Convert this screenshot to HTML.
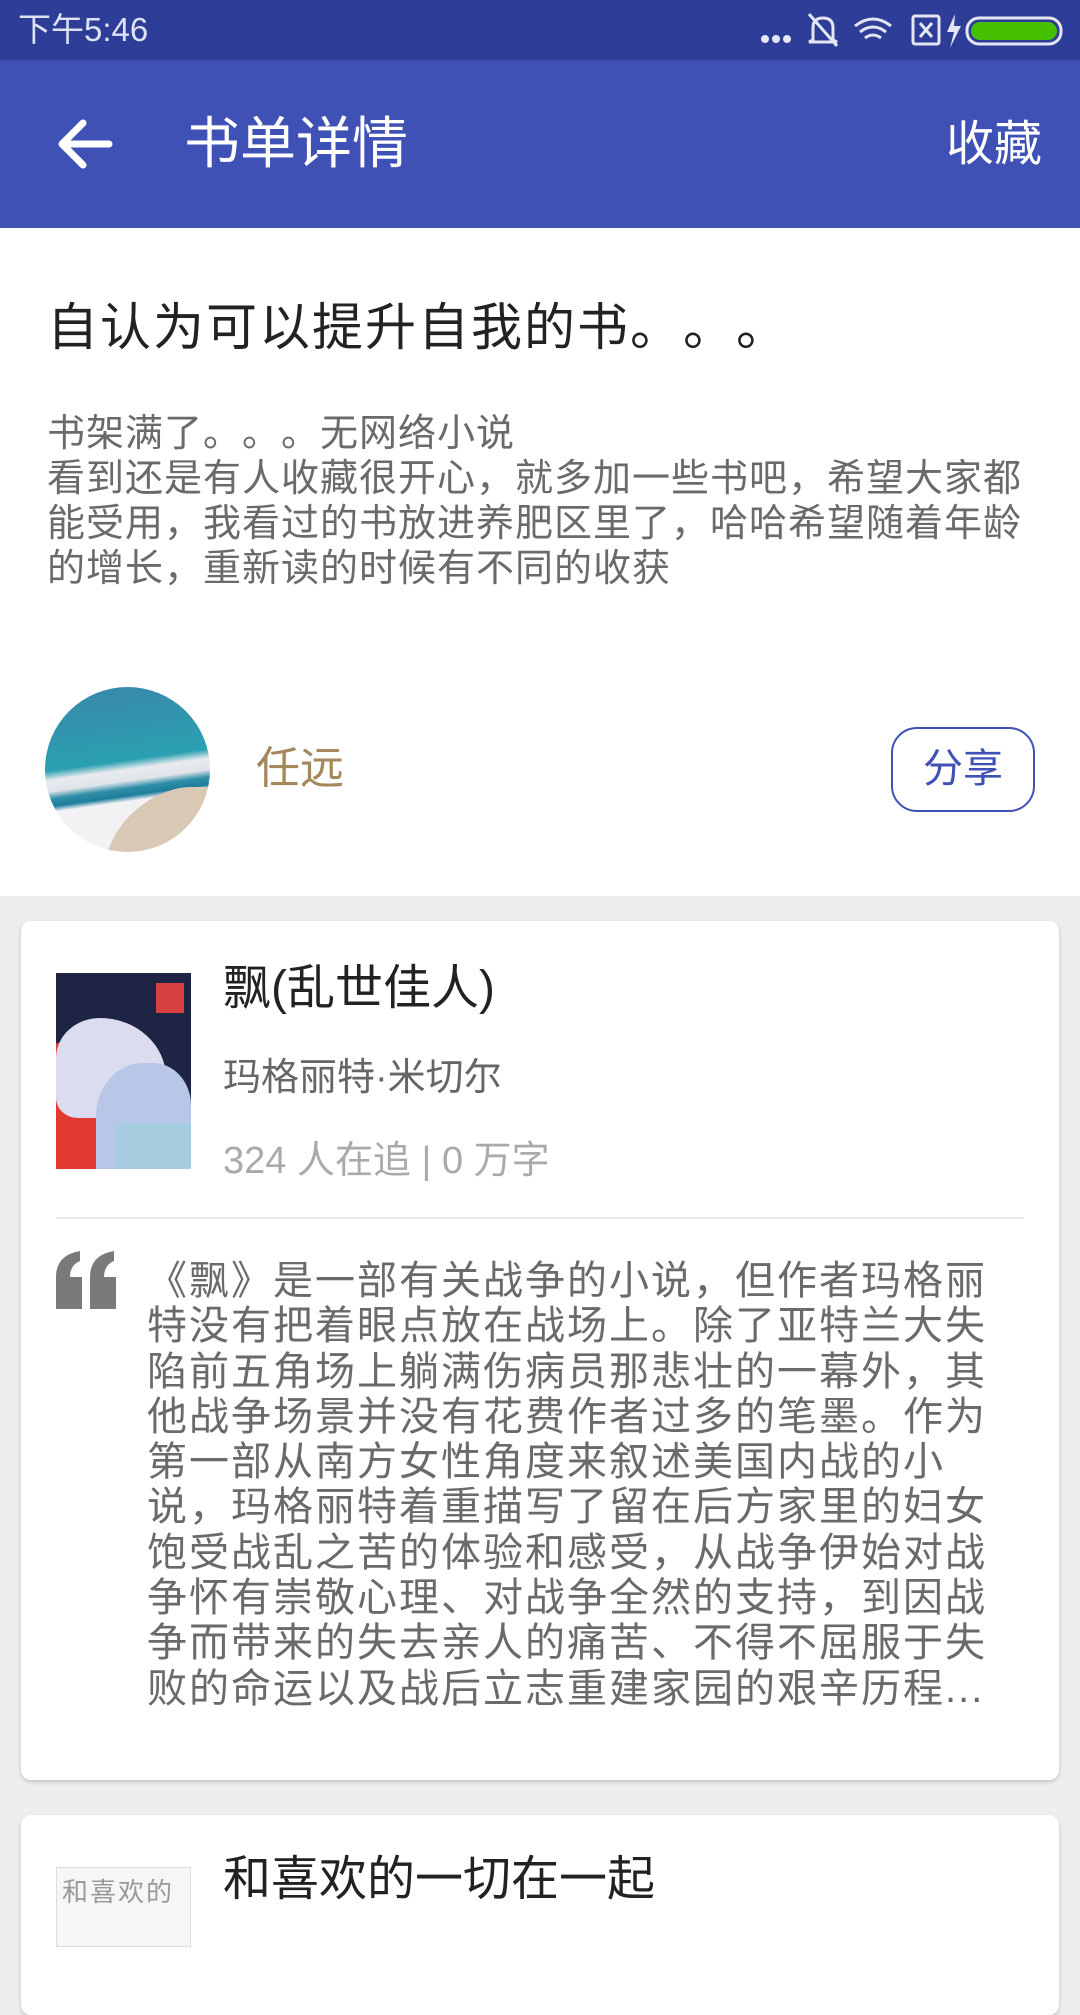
<!DOCTYPE html>
<html><head><meta charset="utf-8">
<style>
*{margin:0;padding:0;box-sizing:border-box}
body{width:1080px;height:1920px;overflow:hidden;background:#eeeeee;font-family:"Liberation Sans","Noto Sans CJK SC",sans-serif;position:relative;text-spacing-trim:space-all}
.abs{position:absolute}
.nw{white-space:nowrap}
</style></head><body>
<div class="abs" style="left:0;top:0;width:1080px;height:60px;background:#2e3d98"></div>
<div class="abs nw" style="left:18px;top:8px;font-size:33px;color:#dfe2f2;line-height:44px">下午5:46</div>
<svg class="abs" style="left:755px;top:10px" width="310" height="40" viewBox="0 0 310 40">
<g fill="#e4e6f4"><circle cx="10" cy="29" r="4"/><circle cx="21" cy="29" r="4"/><circle cx="32" cy="29" r="4"/></g>
<g stroke="#e4e6f4" stroke-width="3" fill="none">
<path d="M58 30 L58 18 Q58 8 68 8 Q78 8 78 18 L78 30 L82 32 L54 32 Z"/><line x1="54" y1="4" x2="82" y2="36"/>
<path d="M100 16 Q118 2 136 16"/><path d="M105 22 Q118 12 131 22"/><path d="M110 28 Q118 22 126 28"/>
<rect x="158" y="6" width="26" height="28" rx="2"/><path d="M165 13 L177 27 M177 13 L165 27"/>
</g>
<path d="M200 4 L192 22 L199 22 L195 38 L206 16 L199 16 Z" fill="#e4e6f4"/>
<rect x="212" y="8" width="94" height="26" rx="12" fill="none" stroke="#e4e6f4" stroke-width="3"/>
<rect x="216" y="12" width="86" height="18" rx="9" fill="#44c000"/>
</svg>
<div class="abs" style="left:0;top:60px;width:1080px;height:168px;background:#3f51b5"></div>
<svg class="abs" style="left:55px;top:118px" width="58" height="52" viewBox="0 0 58 52"><path d="M54 26 H8 M28 5 L7 26 L28 47" stroke="#fff" stroke-width="7" fill="none" stroke-linecap="round" stroke-linejoin="round"/></svg>
<div class="abs nw" style="left:184px;top:112px;font-size:56px;color:#fff;line-height:64px">书单详情</div>
<div class="abs nw" style="right:38px;top:117px;font-size:48px;color:#fff;line-height:56px">收藏</div>
<div class="abs" style="left:0;top:228px;width:1080px;height:668px;background:#fff"></div>
<div class="abs nw" style="left:47px;top:298px;font-size:51px;color:#222;line-height:60px;letter-spacing:2px">自认为可以提升自我的书。。。</div>
<div class="abs nw" style="left:47px;top:412px;font-size:38px;color:#6a6a6a;line-height:45px;letter-spacing:1px">书架满了。。。无网络小说<br>看到还是有人收藏很开心，就多加一些书吧，希望大家都<br>能受用，我看过的书放进养肥区里了，哈哈希望随着年龄<br>的增长，重新读的时候有不同的收获</div>
<div class="abs" style="left:45px;top:687px;width:165px;height:165px;border-radius:50%;overflow:hidden;background:linear-gradient(172deg,#3a86a8 0%,#2aa0b0 45%,#e8eaee 50%,#e0e4ea 56%,#2f8fa8 60%,#1e7d9c 64%,#f2f2f4 67%)">
<div class="abs" style="left:70px;top:100px;width:140px;height:90px;background:#d8c8b4;border-radius:60px 0 0 0;transform:skewX(-20deg)"></div>
</div>
<div class="abs nw" style="left:256px;top:743px;font-size:44px;color:#a4875a;line-height:52px">任远</div>
<div class="abs" style="left:891px;top:727px;width:144px;height:85px;border:2.5px solid #3f51b5;border-radius:26px;color:#3f51b5;font-size:40px;line-height:80px;text-align:center">分享</div>
<div class="abs" style="left:21px;top:921px;width:1038px;height:859px;background:#fff;border-radius:10px;box-shadow:0 2px 4px rgba(0,0,0,0.18)"></div>
<div class="abs" style="left:56px;top:973px;width:135px;height:196px;overflow:hidden;background:#1e2444">
<div class="abs" style="left:0;top:70px;width:80px;height:126px;background:#e03a30"></div>
<div class="abs" style="left:0;top:45px;width:110px;height:100px;background:#dcdcf0;border-radius:40% 60% 30% 20%"></div>
<div class="abs" style="left:40px;top:90px;width:95px;height:106px;background:#b8c6e8;border-radius:50% 40% 0 0"></div>
<div class="abs" style="left:60px;top:150px;width:75px;height:46px;background:#a6cce0"></div>
<div class="abs" style="left:100px;top:10px;width:28px;height:30px;background:#d84040"></div>
</div>
<div class="abs nw" style="left:223px;top:961px;font-size:48px;color:#222;line-height:56px">飘(乱世佳人)</div>
<div class="abs nw" style="left:223px;top:1055px;font-size:38px;color:#666;line-height:46px">玛格丽特·米切尔</div>
<div class="abs nw" style="left:223px;top:1138px;font-size:38px;color:#aaa;line-height:46px">324 人在追 | 0 万字</div>
<div class="abs" style="left:56px;top:1217px;width:968px;height:2px;background:#ebebeb"></div>
<svg class="abs" style="left:56px;top:1251px" width="62" height="58" viewBox="0 0 62 58">
<path d="M0 58 V26 Q0 4 24 0 V10 Q14 14 14 26 H26 V58 Z" fill="#7a7a7a"/>
<path d="M34 58 V26 Q34 4 58 0 V10 Q48 14 48 26 H60 V58 Z" fill="#7a7a7a"/>
</svg>
<div class="abs nw" style="left:147px;top:1259px;font-size:40px;color:#6a6a6a;line-height:45.3px;letter-spacing:2px">《飘》是一部有关战争的小说，但作者玛格丽<br>特没有把着眼点放在战场上。除了亚特兰大失<br>陷前五角场上躺满伤病员那悲壮的一幕外，其<br>他战争场景并没有花费作者过多的笔墨。作为<br>第一部从南方女性角度来叙述美国内战的小<br>说，玛格丽特着重描写了留在后方家里的妇女<br>饱受战乱之苦的体验和感受，从战争伊始对战<br>争怀有崇敬心理、对战争全然的支持，到因战<br>争而带来的失去亲人的痛苦、不得不屈服于失<br>败的命运以及战后立志重建家园的艰辛历程...</div>
<div class="abs" style="left:21px;top:1815px;width:1038px;height:200px;background:#fff;border-radius:10px;box-shadow:0 2px 4px rgba(0,0,0,0.18)"></div>
<div class="abs" style="left:56px;top:1867px;width:135px;height:80px;background:#f6f6f4;border:1px solid #ddd"></div>
<div class="abs nw" style="left:62px;top:1877px;font-size:26px;color:#999;line-height:30px;letter-spacing:2px">和喜欢的</div>
<div class="abs nw" style="left:223px;top:1852px;font-size:48px;color:#222;line-height:56px">和喜欢的一切在一起</div>
</body></html>
